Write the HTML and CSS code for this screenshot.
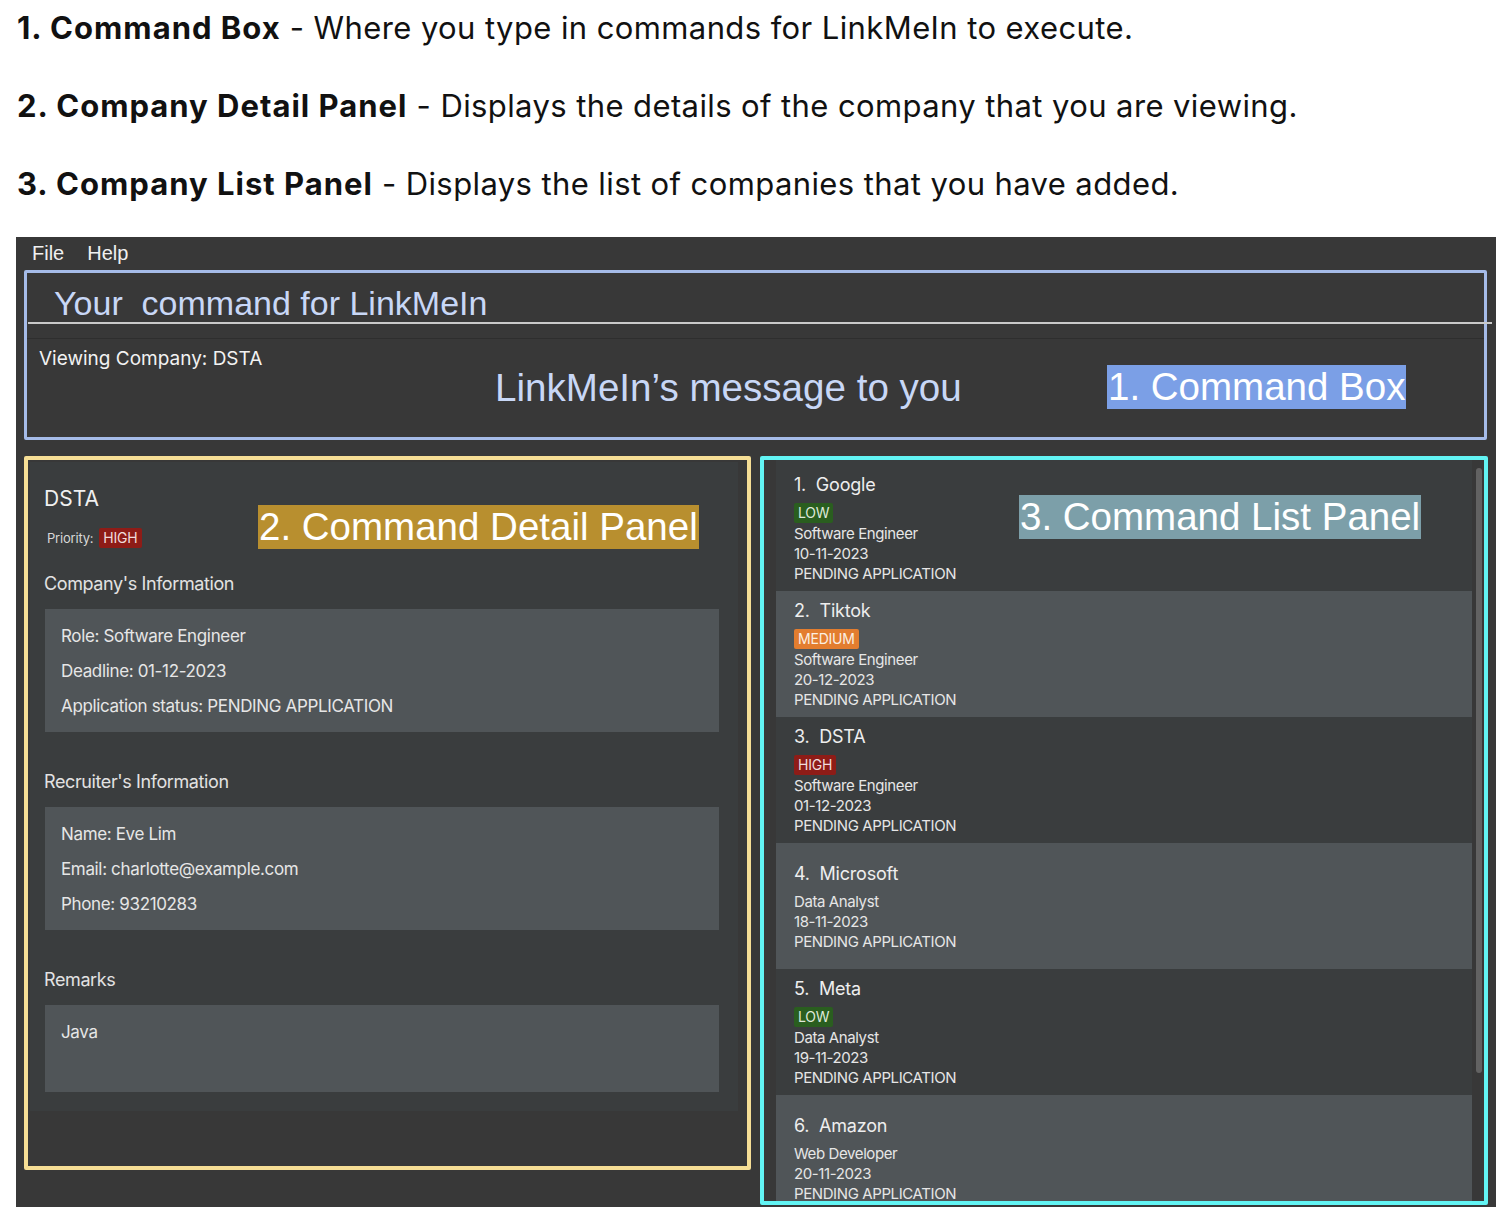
FILE: index.html
```html
<!DOCTYPE html>
<html lang="en">
<head>
<meta charset="utf-8">
<title>LinkMeIn UI</title>
<link rel="stylesheet" href="styles.css">
</head>
<body>
<div class="doc">
  <p><b>1. Command Box</b> - Where you type in commands for LinkMeIn to execute.</p>
  <p><b>2. Company Detail Panel</b> - Displays the details of the company that you are viewing.</p>
  <p><b>3. Company List Panel</b> - Displays the list of companies that you have added.</p>
</div>

<div class="app">
  <div class="menubar"><span>File</span><span>Help</span></div>

  <div class="cmdbox">
    <div class="cmd-input">Your&nbsp; command for LinkMeIn</div>
    <div class="cmd-rule"></div>
    <div class="result">
      <div class="result-text">Viewing Company: DSTA</div>
      <span class="hint">LinkMeIn’s message to you</span>
      <span class="tag tag-blue">1. Command Box</span>
    </div>
  </div>

  <div class="main">
    <section class="detail">
      <div class="detail-scroll">
        <div class="d-name">DSTA</div>
        <div class="d-priority"><span class="d-plabel">Priority:</span><span class="badge high">HIGH</span></div>
        <div class="d-title first">Company's Information</div>
        <div class="d-box">
          <div>Role: Software Engineer</div>
          <div>Deadline: 01-12-2023</div>
          <div>Application status: PENDING APPLICATION</div>
        </div>
        <div class="d-title">Recruiter's Information</div>
        <div class="d-box">
          <div>Name: Eve Lim</div>
          <div>Email: charlotte@example.com</div>
          <div>Phone: 93210283</div>
        </div>
        <div class="d-title">Remarks</div>
        <div class="d-box remarks">
          <div>Java</div>
        </div>
      </div>
      <span class="tag tag-gold">2. Command Detail Panel</span>
    </section>

    <section class="list">
      <div class="list-strip"></div>
      <div class="cells">
        <div class="cell">
          <div class="c-title">1.&nbsp; Google</div>
          <span class="badge low">LOW</span>
          <div class="c-line">Software Engineer</div>
          <div class="c-line">10-11-2023</div>
          <div class="c-line">PENDING APPLICATION</div>
        </div>
        <div class="cell alt">
          <div class="c-title">2.&nbsp; Tiktok</div>
          <span class="badge medium">MEDIUM</span>
          <div class="c-line">Software Engineer</div>
          <div class="c-line">20-12-2023</div>
          <div class="c-line">PENDING APPLICATION</div>
        </div>
        <div class="cell">
          <div class="c-title">3.&nbsp; DSTA</div>
          <span class="badge high">HIGH</span>
          <div class="c-line">Software Engineer</div>
          <div class="c-line">01-12-2023</div>
          <div class="c-line">PENDING APPLICATION</div>
        </div>
        <div class="cell alt nobadge">
          <div class="c-title">4.&nbsp; Microsoft</div>
          <div class="c-line">Data Analyst</div>
          <div class="c-line">18-11-2023</div>
          <div class="c-line">PENDING APPLICATION</div>
        </div>
        <div class="cell">
          <div class="c-title">5.&nbsp; Meta</div>
          <span class="badge low">LOW</span>
          <div class="c-line">Data Analyst</div>
          <div class="c-line">19-11-2023</div>
          <div class="c-line">PENDING APPLICATION</div>
        </div>
        <div class="cell alt nobadge">
          <div class="c-title">6.&nbsp; Amazon</div>
          <div class="c-line">Web Developer</div>
          <div class="c-line">20-11-2023</div>
          <div class="c-line">PENDING APPLICATION</div>
        </div>
      </div>
      <div class="scroll-track"><div class="scroll-thumb"></div></div>
      <span class="tag tag-teal">3. Command List Panel</span>
    </section>
  </div>
</div>
</body>
</html>
```

FILE: styles.css
```css
* { box-sizing: border-box; }

html, body {
  margin: 0;
  padding: 0;
  background: #ffffff;
}

body {
  font-family: Inter, "Open Sans", "Liberation Sans", sans-serif;
  color: #111111;
}

/* ---------- document text ---------- */
.doc {
  padding: 10px 0 0 17px;
}

.doc p {
  margin: 0 0 42px 0;
  font-size: 31px;
  line-height: 36px;
  color: #111111;
  letter-spacing: 0.4px;
  white-space: nowrap;
}

.doc p:last-child { margin-bottom: 0; }

.doc b {
  font-weight: 700;
  letter-spacing: 1px;
}

/* ---------- app frame ---------- */
.app {
  margin: 35px 0 0 16px;
  width: 1480px;
  height: 970px;
  background: #383838;
  overflow: hidden;
  font-family: Inter, "Open Sans", sans-serif;
  color: #e6e6e6;
}

.menubar {
  height: 33px;
  display: flex;
  align-items: center;
  gap: 23px;
  padding-left: 16px;
  font-size: 20px;
  color: #f0f0f0;
  font-family: "Liberation Sans", Arial, sans-serif;
}

/* ---------- command box ---------- */
.cmdbox {
  margin-left: 8px;
  width: 1463px;
  height: 170px;
  border: 3px solid #a5bbe8;
  border-radius: 2px;
  display: flex;
  flex-direction: column;
}

.cmd-input {
  height: 49px;
  padding: 10px 0 0 27px;
  font-family: "Liberation Sans", Arial, sans-serif;
  font-size: 34px;
  line-height: 40px;
  color: #c8d7f6;
}

.cmd-rule {
  height: 2px;
  margin: 0 -8px 0 1px;
  background: #c9c9c9;
}

.result {
  position: relative;
  flex: 1;
  margin-top: 14px;
  border-top: 1px solid #2e2e2e;
  padding: 8px 0 0 12px;
}

.result-text {
  font-size: 19px;
  line-height: 24px;
  color: #f2f2f2;
  letter-spacing: 0;
}

.hint {
  position: absolute;
  left: 468px;
  top: 27px;
  font-family: "Liberation Sans", Arial, sans-serif;
  font-size: 38.6px;
  line-height: 44px;
  color: #c8d7f6;
  white-space: nowrap;
}

.tag {
  position: absolute;
  font-family: "Liberation Sans", Arial, sans-serif;
  font-size: 38.5px;
  line-height: 44px;
  color: #ffffff;
  padding: 0 1px;
  white-space: nowrap;
}

.tag-blue {
  left: 1080px;
  top: 26px;
  background: #7b9fe6;
}

.tag-gold {
  left: 230px;
  top: 45px;
  background: #b88f2f;
}

.tag-teal {
  left: 255px;
  top: 35px;
  background: #7c9fa9;
}

/* ---------- main area ---------- */
.main {
  display: flex;
  align-items: flex-start;
  gap: 9px;
  margin: 16px 0 0 8px;
}

.detail {
  position: relative;
  width: 727px;
  height: 714px;
  border: 4px solid #f6de95;
  border-radius: 2px;
  background: #383838;
  padding: 2px 9px 0 2px;
}

.detail-scroll {
  height: 649px;
  background: #3a3d3e;
  padding: 24px 0 0 14px;
}

.d-name {
  font-size: 21px;
  line-height: 26px;
  color: #f0f0f0;
}

.d-priority {
  display: flex;
  align-items: center;
  gap: 6px;
  margin: 16px 0 0 3px;
  height: 20px;
}

.d-plabel {
  font-size: 13px;
  color: #d8d8d8;
  letter-spacing: -0.2px;
}

.d-title {
  margin-top: 39px;
  font-size: 18px;
  line-height: 22px;
  color: #e2e2e2;
  letter-spacing: -0.4px;
}

.d-title.first { margin-top: 25px; }

.d-box {
  margin: 14px 0 0 1px;
  width: 674px;
  background: #505558;
  padding: 10px 16px 8px;
  font-size: 17px;
  line-height: 35px;
  color: #e6e6e6;
  letter-spacing: -0.35px;
}

.d-box.remarks { height: 87px; }

/* ---------- badges ---------- */
.badge {
  display: inline-block;
  height: 20px;
  padding: 0 4px;
  border-radius: 2px;
  font-size: 14px;
  line-height: 20px;
  letter-spacing: -0.2px;
}

.badge.low { background: #2a5e1f; color: #dfe8da; }
.badge.medium { background: #e37d2f; color: #fbefe2; }
.badge.high { background: #8e1c17; color: #f0dcdc; }

/* ---------- list panel ---------- */
.list {
  position: relative;
  width: 728px;
  height: 749px;
  border: 4px solid #62f4f4;
  border-radius: 2px;
  background: #383838;
  display: flex;
}

.list-strip {
  width: 12px;
  flex: none;
}

.cells {
  width: 696px;
  flex: none;
  padding-top: 5px;
  background: #3a3d3e;
  overflow: hidden;
}

.cell {
  height: 126px;
  padding: 8px 0 0 18px;
  background: #3a3d3e;
  overflow: hidden;
}

.cell.alt { background: #505558; }

.cell.nobadge { padding-top: 19px; }

.c-title {
  font-size: 18px;
  line-height: 24px;
  color: #eeeeee;
  letter-spacing: -0.2px;
}

.cell .badge {
  margin: 6px 0 1px;
  vertical-align: top;
}

.cell.nobadge .c-title { margin-bottom: 6px; }

.c-line {
  font-size: 15px;
  line-height: 20px;
  color: #e6e6e6;
  letter-spacing: -0.4px;
}

.scroll-track {
  width: 6px;
  flex: none;
  margin-left: 4px;
  padding-top: 8px;
}

.scroll-thumb {
  width: 6px;
  height: 605px;
  border-radius: 3px;
  background: #626262;
}
```
